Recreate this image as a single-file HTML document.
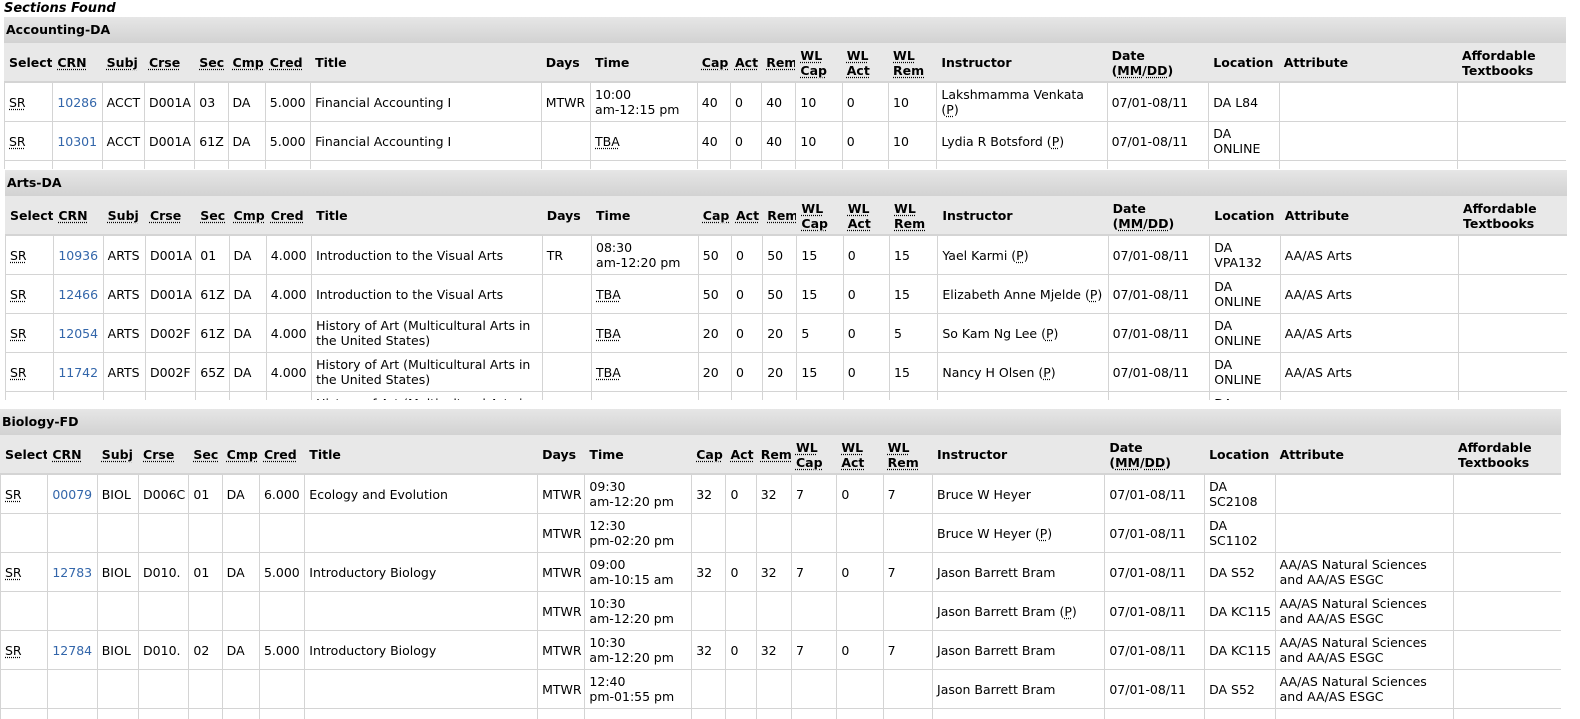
<!DOCTYPE html>
<html><head><meta charset="utf-8"><style>
body{margin:0;background:#fff;font-family:"DejaVu Sans","Liberation Sans",sans-serif;font-size:12.5px;color:#000;}
.cap{position:absolute;left:4px;top:1px;font-weight:bold;font-style:italic;font-size:13px;}
.blk{position:absolute;overflow:hidden;background:#fff}
.bar{height:26px;background:linear-gradient(#e6e6e6,#d2d2d2);font-weight:bold;line-height:26px;padding-left:2px;font-size:12.5px}
table{border-collapse:collapse;table-layout:fixed;width:1573px}
td,th{border:1px solid #d4d4d4;padding:0 4px;height:38px;vertical-align:middle;text-align:left;line-height:15px;overflow:hidden;white-space:nowrap}
th{background:#e8e8e8;border-color:#e8e8e8;border-bottom:2px solid #d4d4d4;height:37px;font-weight:bold}
th u,td u{text-decoration:underline dotted;text-underline-offset:2px}
a{color:#3366aa;text-decoration:none}
</style></head><body>
<div class="cap">Sections Found</div>

<div class="blk" style="left:4px;top:17px;width:1562px;height:152px">
<div class="bar">Accounting-DA</div>
<table>
<colgroup><col style="width:48px"><col style="width:49px"><col style="width:42px"><col style="width:50px"><col style="width:33px"><col style="width:37px"><col style="width:45px"><col style="width:229px"><col style="width:49px"><col style="width:106px"><col style="width:33px"><col style="width:31px"><col style="width:34px"><col style="width:46px"><col style="width:46px"><col style="width:48px"><col style="width:169px"><col style="width:101px"><col style="width:70px"><col style="width:177px"><col style="width:118px"></colgroup>
<tr><th>Select</th><th><u>CRN</u></th><th><u>Subj</u></th><th><u>Crse</u></th><th><u>Sec</u></th><th><u>Cmp</u></th><th><u>Cred</u></th><th>Title</th><th>Days</th><th>Time</th><th><u>Cap</u></th><th><u>Act</u></th><th><u>Rem</u></th><th><u>WL</u><br><u>Cap</u></th><th><u>WL</u><br><u>Act</u></th><th><u>WL</u><br><u>Rem</u></th><th>Instructor</th><th>Date<br>(<u>MM</u>/<u>DD</u>)</th><th>Location</th><th>Attribute</th><th>Affordable<br>Textbooks</th></tr>
<tr><td><u>SR</u></td><td><a>10286</a></td><td>ACCT</td><td>D001A</td><td>03</td><td>DA</td><td>5.000</td><td>Financial Accounting I</td><td>MTWR</td><td>10:00<br>am-12:15 pm</td><td>40</td><td>0</td><td>40</td><td>10</td><td>0</td><td>10</td><td>Lakshmamma Venkata<br>(<u>P</u>)</td><td>07/01-08/11</td><td>DA L84</td><td></td><td></td></tr>
<tr><td><u>SR</u></td><td><a>10301</a></td><td>ACCT</td><td>D001A</td><td>61Z</td><td>DA</td><td>5.000</td><td>Financial Accounting I</td><td></td><td><u>TBA</u></td><td>40</td><td>0</td><td>40</td><td>10</td><td>0</td><td>10</td><td>Lydia R Botsford (<u>P</u>)</td><td>07/01-08/11</td><td>DA<br>ONLINE</td><td></td><td></td></tr>
<tr><td></td><td></td><td></td><td></td><td></td><td></td><td></td><td></td><td></td><td></td><td></td><td></td><td></td><td></td><td></td><td></td><td></td><td></td><td></td><td></td><td></td></tr>
</table></div>

<div class="blk" style="left:5px;top:170px;width:1562px;height:230px">
<div class="bar">Arts-DA</div>
<table>
<colgroup><col style="width:48px"><col style="width:49px"><col style="width:42px"><col style="width:50px"><col style="width:33px"><col style="width:37px"><col style="width:45px"><col style="width:229px"><col style="width:49px"><col style="width:106px"><col style="width:33px"><col style="width:31px"><col style="width:34px"><col style="width:46px"><col style="width:46px"><col style="width:48px"><col style="width:169px"><col style="width:101px"><col style="width:70px"><col style="width:177px"><col style="width:118px"></colgroup>
<tr><th>Select</th><th><u>CRN</u></th><th><u>Subj</u></th><th><u>Crse</u></th><th><u>Sec</u></th><th><u>Cmp</u></th><th><u>Cred</u></th><th>Title</th><th>Days</th><th>Time</th><th><u>Cap</u></th><th><u>Act</u></th><th><u>Rem</u></th><th><u>WL</u><br><u>Cap</u></th><th><u>WL</u><br><u>Act</u></th><th><u>WL</u><br><u>Rem</u></th><th>Instructor</th><th>Date<br>(<u>MM</u>/<u>DD</u>)</th><th>Location</th><th>Attribute</th><th>Affordable<br>Textbooks</th></tr>
<tr><td><u>SR</u></td><td><a>10936</a></td><td>ARTS</td><td>D001A</td><td>01</td><td>DA</td><td>4.000</td><td>Introduction to the Visual Arts</td><td>TR</td><td>08:30<br>am-12:20 pm</td><td>50</td><td>0</td><td>50</td><td>15</td><td>0</td><td>15</td><td>Yael Karmi (<u>P</u>)</td><td>07/01-08/11</td><td>DA<br>VPA132</td><td>AA/AS Arts</td><td></td></tr>
<tr><td><u>SR</u></td><td><a>12466</a></td><td>ARTS</td><td>D001A</td><td>61Z</td><td>DA</td><td>4.000</td><td>Introduction to the Visual Arts</td><td></td><td><u>TBA</u></td><td>50</td><td>0</td><td>50</td><td>15</td><td>0</td><td>15</td><td>Elizabeth Anne Mjelde (<u>P</u>)</td><td>07/01-08/11</td><td>DA<br>ONLINE</td><td>AA/AS Arts</td><td></td></tr>
<tr><td><u>SR</u></td><td><a>12054</a></td><td>ARTS</td><td>D002F</td><td>61Z</td><td>DA</td><td>4.000</td><td>History of Art (Multicultural Arts in<br>the United States)</td><td></td><td><u>TBA</u></td><td>20</td><td>0</td><td>20</td><td>5</td><td>0</td><td>5</td><td>So Kam Ng Lee (<u>P</u>)</td><td>07/01-08/11</td><td>DA<br>ONLINE</td><td>AA/AS Arts</td><td></td></tr>
<tr><td><u>SR</u></td><td><a>11742</a></td><td>ARTS</td><td>D002F</td><td>65Z</td><td>DA</td><td>4.000</td><td>History of Art (Multicultural Arts in<br>the United States)</td><td></td><td><u>TBA</u></td><td>20</td><td>0</td><td>20</td><td>15</td><td>0</td><td>15</td><td>Nancy H Olsen (<u>P</u>)</td><td>07/01-08/11</td><td>DA<br>ONLINE</td><td>AA/AS Arts</td><td></td></tr>
<tr><td></td><td></td><td></td><td></td><td></td><td></td><td></td><td>History of Art (Multicultural Arts in<br>the United States)</td><td></td><td></td><td></td><td></td><td></td><td></td><td></td><td></td><td></td><td></td><td>DA<br>ONLINE</td><td></td><td></td></tr>
</table></div>

<div class="blk" style="left:0;top:409px;width:1561px;height:310px">
<div class="bar">Biology-FD</div>
<table>
<colgroup><col style="width:47px"><col style="width:49px"><col style="width:41px"><col style="width:50px"><col style="width:33px"><col style="width:37px"><col style="width:45px"><col style="width:231px"><col style="width:47px"><col style="width:106px"><col style="width:34px"><col style="width:30px"><col style="width:35px"><col style="width:45px"><col style="width:46px"><col style="width:49px"><col style="width:171px"><col style="width:99px"><col style="width:70px"><col style="width:177px"><col style="width:118px"></colgroup>
<tr><th>Select</th><th><u>CRN</u></th><th><u>Subj</u></th><th><u>Crse</u></th><th><u>Sec</u></th><th><u>Cmp</u></th><th><u>Cred</u></th><th>Title</th><th>Days</th><th>Time</th><th><u>Cap</u></th><th><u>Act</u></th><th><u>Rem</u></th><th><u>WL</u><br><u>Cap</u></th><th><u>WL</u><br><u>Act</u></th><th><u>WL</u><br><u>Rem</u></th><th>Instructor</th><th>Date<br>(<u>MM</u>/<u>DD</u>)</th><th>Location</th><th>Attribute</th><th>Affordable<br>Textbooks</th></tr>
<tr><td><u>SR</u></td><td><a>00079</a></td><td>BIOL</td><td>D006C</td><td>01</td><td>DA</td><td>6.000</td><td>Ecology and Evolution</td><td>MTWR</td><td>09:30<br>am-12:20 pm</td><td>32</td><td>0</td><td>32</td><td>7</td><td>0</td><td>7</td><td>Bruce W Heyer</td><td>07/01-08/11</td><td>DA<br>SC2108</td><td></td><td></td></tr>
<tr><td></td><td></td><td></td><td></td><td></td><td></td><td></td><td></td><td>MTWR</td><td>12:30<br>pm-02:20 pm</td><td></td><td></td><td></td><td></td><td></td><td></td><td>Bruce W Heyer (<u>P</u>)</td><td>07/01-08/11</td><td>DA<br>SC1102</td><td></td><td></td></tr>
<tr><td><u>SR</u></td><td><a>12783</a></td><td>BIOL</td><td>D010.</td><td>01</td><td>DA</td><td>5.000</td><td>Introductory Biology</td><td>MTWR</td><td>09:00<br>am-10:15 am</td><td>32</td><td>0</td><td>32</td><td>7</td><td>0</td><td>7</td><td>Jason Barrett Bram</td><td>07/01-08/11</td><td>DA S52</td><td>AA/AS Natural Sciences<br>and AA/AS ESGC</td><td></td></tr>
<tr><td></td><td></td><td></td><td></td><td></td><td></td><td></td><td></td><td>MTWR</td><td>10:30<br>am-12:20 pm</td><td></td><td></td><td></td><td></td><td></td><td></td><td>Jason Barrett Bram (<u>P</u>)</td><td>07/01-08/11</td><td>DA KC115</td><td>AA/AS Natural Sciences<br>and AA/AS ESGC</td><td></td></tr>
<tr><td><u>SR</u></td><td><a>12784</a></td><td>BIOL</td><td>D010.</td><td>02</td><td>DA</td><td>5.000</td><td>Introductory Biology</td><td>MTWR</td><td>10:30<br>am-12:20 pm</td><td>32</td><td>0</td><td>32</td><td>7</td><td>0</td><td>7</td><td>Jason Barrett Bram</td><td>07/01-08/11</td><td>DA KC115</td><td>AA/AS Natural Sciences<br>and AA/AS ESGC</td><td></td></tr>
<tr><td></td><td></td><td></td><td></td><td></td><td></td><td></td><td></td><td>MTWR</td><td>12:40<br>pm-01:55 pm</td><td></td><td></td><td></td><td></td><td></td><td></td><td>Jason Barrett Bram</td><td>07/01-08/11</td><td>DA S52</td><td>AA/AS Natural Sciences<br>and AA/AS ESGC</td><td></td></tr>
<tr><td></td><td></td><td></td><td></td><td></td><td></td><td></td><td></td><td></td><td></td><td></td><td></td><td></td><td></td><td></td><td></td><td></td><td></td><td></td><td></td><td></td></tr>
</table></div>
</body></html>
